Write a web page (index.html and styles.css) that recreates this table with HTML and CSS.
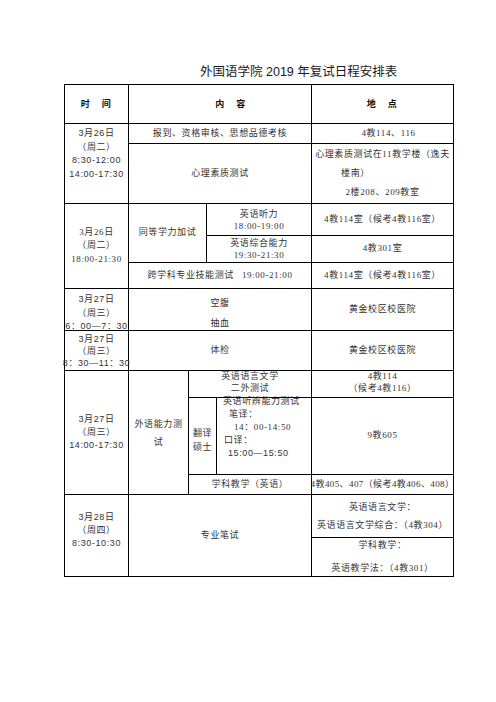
FILE: index.html
```html
<!DOCTYPE html>
<html lang="zh-CN">
<head>
<meta charset="utf-8">
<title>外国语学院2019年复试日程安排表</title>
<link rel="stylesheet" href="styles.css">
</head>
<body>
<div class="page">
  <div class="title">外国语学院 2019 年复试日程安排表</div>
  <div class="sched">
    <div class="cell hd ct gr1">时　间</div>
    <div class="cell hd hd-c cc gr1">内　容</div>
    <div class="cell hd cp gr1">地　点</div>

    <div class="cell ct gr2-4 top t-a sans"><div>3月26日</div><div>（周二）</div><div>8:30-12:00</div><div>14:00-17:30</div></div>
    <div class="cell cc gr2"><div>报到、资格审核、思想品德考核</div></div>
    <div class="cell cp gr2 p-a"><div>4教114、116</div></div>
    <div class="cell cc gr3"><div>心理素质测试</div></div>
    <div class="cell cp gr3 lh19"><div>心理素质测试在11教学楼（逸夫</div><div class="shift-l">楼南）</div><div>2楼208、209教室</div></div>

    <div class="cell ct gr4-7"><div>3月26日</div><div>（周二）</div><div>18:00-21:30</div></div>
    <div class="cell cc-a gr4-6"><div>同等学力加试</div></div>
    <div class="cell cc-b gr4 lh12"><div>英语听力</div><div>18:00-19:00</div></div>
    <div class="cell cp gr4"><div>4教114室（候考4教116室）</div></div>
    <div class="cell cc-b gr5 lh12"><div>英语综合能力</div><div>19:30-21:30</div></div>
    <div class="cell cp gr5"><div>4教301室</div></div>
    <div class="cell cc gr6"><div>跨学科专业技能测试<span class="gap"></span>19:00-21:00</div></div>
    <div class="cell cp gr6"><div>4教114室（候考4教116室）</div></div>

    <div class="cell ct gr7 top t-c sans"><div>3月27日</div><div>（周三）</div><div>6：00—7：30</div></div>
    <div class="cell cc gr7 lh20 t-d"><div>空腹</div><div>抽血</div></div>
    <div class="cell cp gr7"><div>黄金校区校医院</div></div>

    <div class="cell ct gr8 lh12 sans"><div>3月27日</div><div>（周三）</div><div>8：30—11：30</div></div>
    <div class="cell cc gr8"><div>体检</div></div>
    <div class="cell cp gr8"><div>黄金校区校医院</div></div>

    <div class="cell ct gr9-12 lh13 sans"><div>3月27日</div><div>（周三）</div><div>14:00-17:30</div></div>
    <div class="cell cc-x gr9-12 lh18"><div>外语能力测</div><div>试</div></div>
    <div class="cell cc-y gr9 top lh11 t-e"><div>英语语言文学</div><div>二外测试</div></div>
    <div class="cell cp gr9 top lh11 t-e"><div>4教114</div><div>（候考4教116）</div></div>
    <div class="cell cc-z gr10 lh14 t-f"><div>翻译</div><div>硕士</div></div>
    <div class="cell cc-w gr10 listen">
      <div class="in1">英语听辨能力测试</div>
      <div class="in2">笔译：</div>
      <div class="in3">14：00-14:50</div>
      <div class="in4">口译：</div>
      <div class="in5 sans">15:00—15:50</div>
    </div>
    <div class="cell cp gr10"><div>9教605</div></div>
    <div class="cell cc-y gr11"><div>学科教学（英语）</div></div>
    <div class="cell cp gr11 tight"><div>4教405、407（候考4教406、408）</div></div>

    <div class="cell ct gr12-14 lh13 t-g sans"><div>3月28日</div><div>（周四）</div><div>8:30-10:30</div></div>
    <div class="cell cc gr12-14"><div>专业笔试</div></div>
    <div class="cell cp gr12 lh18"><div>英语语言文学：</div><div>英语语言文学综合：（4教304）</div></div>
    <div class="cell cp gr13 lh23"><div>学科教学：</div><div>英语教学法：（4教301）</div></div>
  </div>
</div>
</body>
</html>
```

FILE: styles.css
```css
body {
  margin: 0;
  background: #ffffff;
}

.page {
  padding: 64px 0 40px 64px;
  font-family: "Liberation Serif", "Noto Sans CJK SC", serif;
  color: #333333;
}

.title {
  margin: 0 0 3px 136px;
  font-family: "Liberation Sans", "Noto Sans CJK SC", sans-serif;
  font-size: 12.5px;
  line-height: 17px;
  color: #1a1a1a;
  white-space: nowrap;
}

.sched {
  display: grid;
  grid-template-columns: 64px 60px 18px 10px 95px 142px;
  grid-template-rows: 39px 20px 60px 32px 27px 26px 42px 40px 27px 77px 20px 43px 39px;
  width: max-content;
  border-top: 1px solid #000;
  border-left: 1px solid #000;
  font-size: 9px;
  letter-spacing: 0.6px;
}

.cell {
  box-sizing: border-box;
  min-width: 0;
  border-right: 1px solid #000;
  border-bottom: 1px solid #000;
  display: flex;
  flex-direction: column;
  justify-content: center;
  align-items: center;
  text-align: center;
  line-height: 13.5px;
  white-space: nowrap;
}

.sans {
  font-family: "Liberation Sans", "Noto Sans CJK SC", sans-serif;
}

.hd {
  font-family: "Noto Sans CJK SC", sans-serif;
  font-weight: 700;
  color: #111;
  letter-spacing: 1.5px;
}

.hd-c {
  padding-left: 22px;
}

/* columns */
.ct { grid-column: 1 / 2; }
.cc { grid-column: 2 / 6; }
.cp { grid-column: 6 / 7; }
.cc-a { grid-column: 2 / 4; }
.cc-b { grid-column: 4 / 6; }
.cc-x { grid-column: 2 / 3; }
.cc-y { grid-column: 3 / 6; }
.cc-z { grid-column: 3 / 5; }
.cc-w { grid-column: 5 / 6; }

/* rows */
.gr1 { grid-row: 1 / 2; }
.gr2 { grid-row: 2 / 3; }
.gr3 { grid-row: 3 / 4; }
.gr4 { grid-row: 4 / 5; }
.gr5 { grid-row: 5 / 6; }
.gr6 { grid-row: 6 / 7; }
.gr7 { grid-row: 7 / 8; }
.gr8 { grid-row: 8 / 9; }
.gr9 { grid-row: 9 / 10; }
.gr10 { grid-row: 10 / 11; }
.gr11 { grid-row: 11 / 12; }
.gr12 { grid-row: 12 / 13; }
.gr13 { grid-row: 13 / 14; }
.gr2-4 { grid-row: 2 / 4; }
.gr4-6 { grid-row: 4 / 6; }
.gr4-7 { grid-row: 4 / 7; }
.gr9-12 { grid-row: 9 / 12; }
.gr12-14 { grid-row: 12 / 14; }

/* line heights */
.lh11 { line-height: 11.5px; }
.lh12 { line-height: 12px; }
.lh13 { line-height: 13px; }
.lh14 { line-height: 14px; }
.lh18 { line-height: 18px; }
.lh19 { line-height: 19px; }
.lh20 { line-height: 20px; }
.lh23 { line-height: 23px; }

.top {
  justify-content: flex-start;
}

.t-a { padding-top: 3px; }
.t-c { padding-top: 4px; }
.t-d { padding-top: 6px; }
.t-e { padding-top: 0; }
.t-f { padding-top: 8px; }
.t-g { padding-bottom: 10px; }

.p-a { padding-left: 12px; }

.shift-l {
  margin-right: 54px;
}

.gap {
  display: inline-block;
  width: 8px;
}

.tight {
  letter-spacing: 0.4px;
}

.listen {
  justify-content: flex-start;
  align-items: flex-start;
  text-align: left;
  line-height: 13px;
  padding-top: 0;
}

.listen .in1 { margin-top: -3px; padding-left: 6px; }
.listen .in2 { padding-left: 12px; }
.listen .in3 { padding-left: 17px; }
.listen .in4 { padding-left: 7px; }
.listen .in5 { padding-left: 11px; }
```
